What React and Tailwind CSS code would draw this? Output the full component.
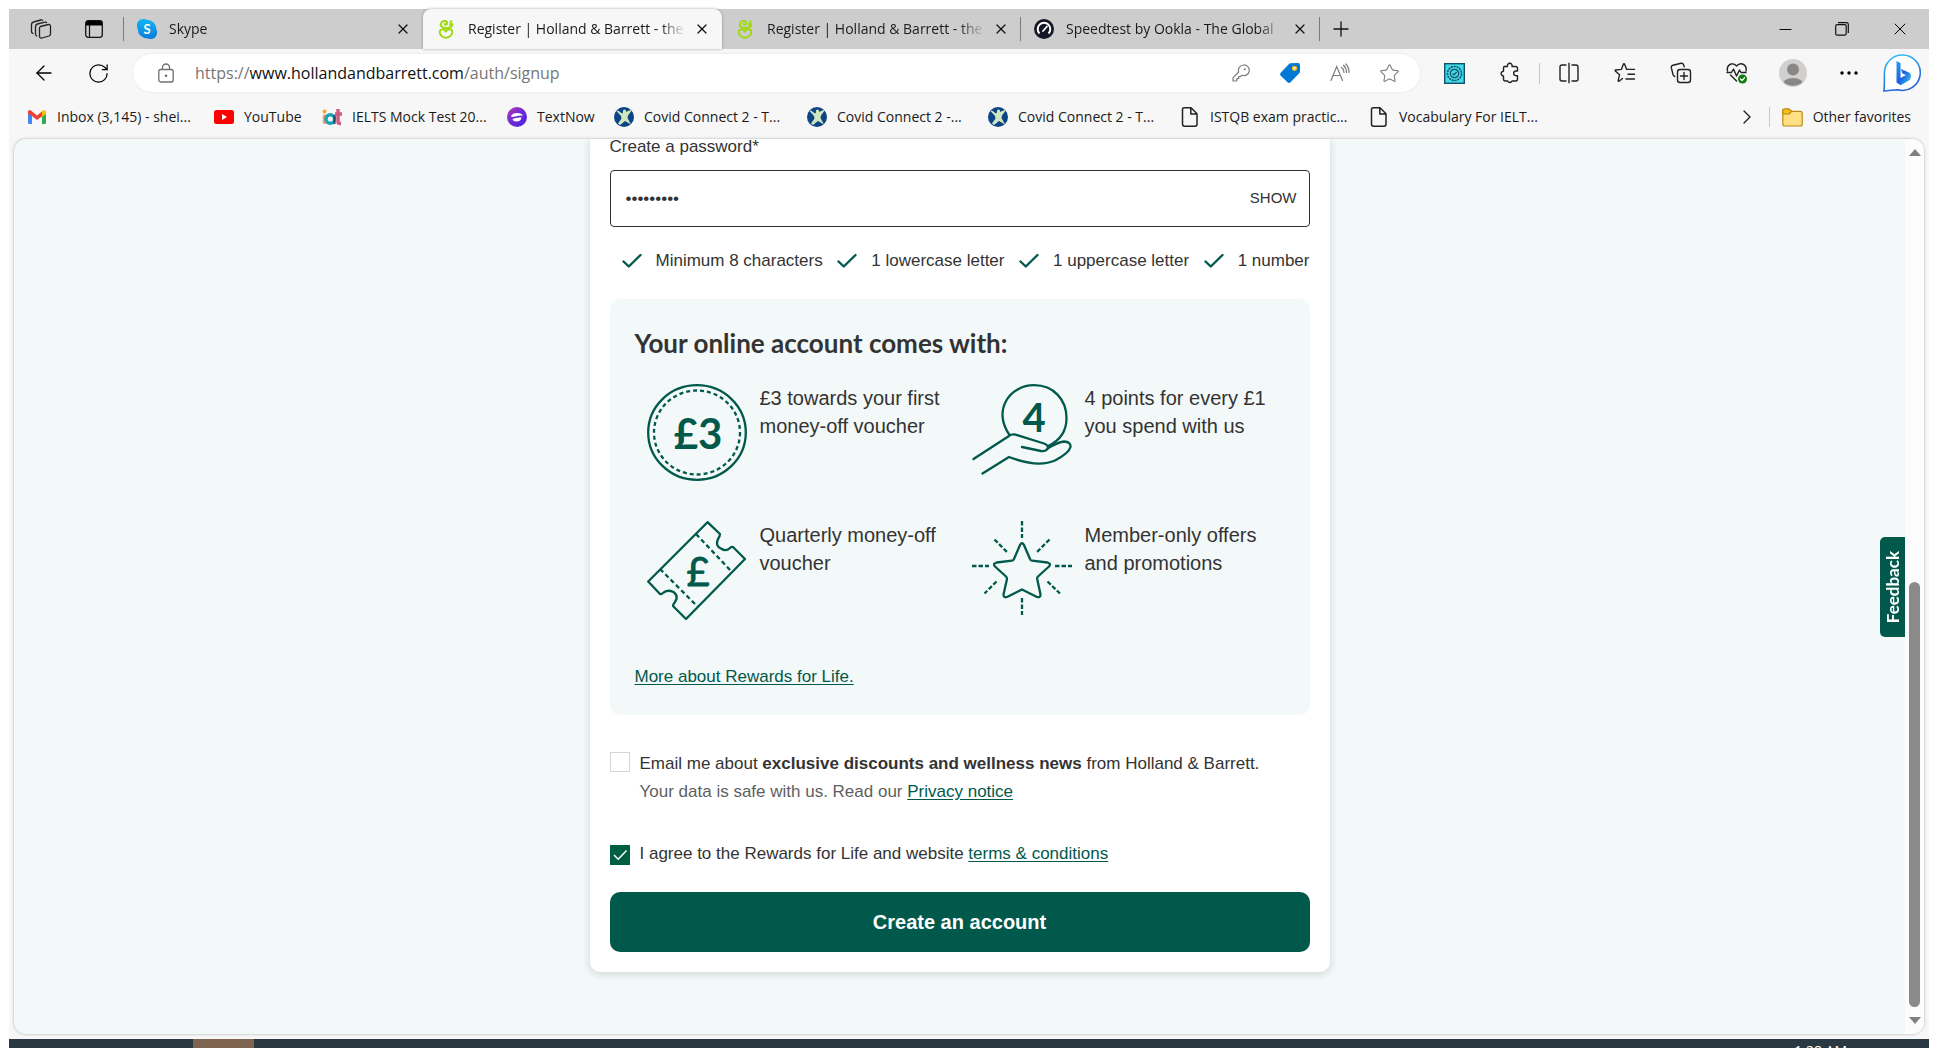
import React from "react";
import { ArrowLeft, RotateCw, Plus, X, Star, ChevronRight, Minus } from "lucide-react";

/* ---------- browser icons ---------- */

function LeafAmpersand() {
  return (
    <svg viewBox="0 0 20 20" className="size-5 shrink-0" fill="none" stroke="#a0d911" strokeWidth="2" strokeLinecap="round" strokeLinejoin="round">
      <path d="M9 9C5.500 8.800 4 6 5.300 3.700C7 1 11.300 1.500 11.200 4.300C11 6 9 6 8.500 5" />
      <path d="M9 9C12.500 9.300 16.300 8.300 16.300 5.800C16 4.300 14 4.500 14 6" />
      <path d="M14.300 3L15.500 2.300" />
      <path d="M9.800 12.500C8.500 9.300 3.500 9.800 3.700 13.300C4 16.500 7 18.700 10 18.700C13.500 18.500 16.800 15.500 16.300 12.500C15.500 9.500 11 9.800 9.800 12.500Z" />
    </svg>
  );
}

function SkypeIcon() {
  return (
    <svg viewBox="0 0 20 20" className="size-5 shrink-0">
      <defs>
        <linearGradient id="skype" x1="0" y1="0" x2="0" y2="1">
          <stop offset="0" stopColor="#12b4f5" />
          <stop offset="1" stopColor="#0b7fdc" />
        </linearGradient>
      </defs>
      <rect width="13" height="13" rx="6" fill="url(#skype)" />
      <rect x="7" y="7" width="13" height="13" rx="6" fill="#0b7fdc" />
      <circle cx="10" cy="10" r="9.300" fill="url(#skype)" />
      <text x="10" y="14.500" fontSize="13" fontWeight="700" fontFamily="Lato, sans-serif" textAnchor="middle" fill="#fff">S</text>
    </svg>
  );
}

function SpeedIcon() {
  return (
    <svg viewBox="0 0 20 20" className="size-5 shrink-0" fill="none">
      <circle cx="10" cy="10" r="10" fill="#141526" />
      <path d="M5.500 14.500A6.300 6.300 0 1 1 14.500 14.500" stroke="#fff" strokeWidth="2" />
      <path d="M9 12L13 7.500" stroke="#fff" strokeWidth="1.800" strokeLinecap="round" />
    </svg>
  );
}

function WorkspacesIcon() {
  return (
    <svg viewBox="0 0 22 20" className="h-5 w-[22px]" fill="none" stroke="#222" strokeWidth="1.300" strokeLinejoin="round" strokeLinecap="round">
      <path d="M10.500 7.500L18.500 5.500Q20.500 5.200 20.500 7.500V15Q20.500 16.500 19 17L12 19Q9.500 19.500 9.500 17V9Q9.500 8 10.500 7.500Z" />
      <path d="M16.500 3.500Q16 2.800 14.800 3.200L7.500 5Q5.500 5.500 5.500 7.500V15Q5.500 16.500 6.800 17" />
      <path d="M12.500 1.400Q12 .8 10.800 1L3.500 3Q1.500 3.500 1.500 5.500V12.500Q1.500 14 3 14.500" />
    </svg>
  );
}

function TabActionsIcon() {
  return (
    <svg viewBox="0 0 18 18" className="size-[18px]" fill="none">
      <rect x=".7" y=".7" width="16.600" height="16.600" rx="2.500" stroke="#111" strokeWidth="1.300" />
      <path d="M1 3Q1 1 3 1H15Q17 1 17 3V5.500H1Z" fill="#000" />
      <path d="M4.500 5V17" stroke="#111" strokeWidth="1.200" />
    </svg>
  );
}

function LockIcon() {
  return (
    <svg viewBox="0 0 16 20" className="h-5 w-4 shrink-0" fill="none" stroke="#6f6f6f" strokeWidth="1.300">
      <rect x=".8" y="6.500" width="14.400" height="12.500" rx="2" />
      <path d="M4.500 6.500V4.500A3.500 3.500 0 0 1 11.500 4.500V6.500" />
      <circle cx="8" cy="12.800" r="1.300" fill="#6f6f6f" stroke="none" />
    </svg>
  );
}

function KeyIcon() {
  return (
    <svg viewBox="0 0 18 18" className="size-[18px]" fill="none" stroke="#7c7c7c" strokeWidth="1.200" strokeLinejoin="round">
      <path d="M11.500 1A5.300 5.300 0 1 1 10 11.200L8.500 12.700H6.700V14.600H4.800V16.300L4 17H1V13.700L6.700 8A5.300 5.300 0 0 1 11.500 1Z" />
      <circle cx="12.800" cy="5.200" r="1" fill="#7c7c7c" stroke="none" />
    </svg>
  );
}

function TagIcon() {
  return (
    <svg viewBox="0 0 22 22" className="size-[22px]">
      <path d="M11.500 1.300L19 1Q21 1 21 3V9.500Q21 10.500 20.200 11.300L11.500 20.300Q10 21.500 8.500 20.300L1.500 13.500Q.5 12 1.700 10.700L9.800 2.200Q10.500 1.400 11.500 1.300Z" fill="#0078d4" />
      <circle cx="15.500" cy="6.300" r="1.900" fill="#fff" stroke="#f2c010" strokeWidth="1.500" />
    </svg>
  );
}

function ReadAloudIcon() {
  return (
    <svg viewBox="0 0 20 20" className="size-5" fill="none" stroke="#7a7a7a" strokeWidth="1.200" strokeLinecap="round">
      <path d="M1 17.500L6.700 3.500L12.500 17.500M3 12.500H10.500" />
      <path d="M11.500 4.300Q14 6 14 9.500M13.500 2.200Q16.500 5 16.500 9.500M15.800 1Q19 4 19 9.500" />
    </svg>
  );
}

function GearTile() {
  return (
    <svg viewBox="0 0 21 21" className="size-[21px]" fill="none" stroke="#12506b">
      <rect x=".7" y=".7" width="19.600" height="19.600" fill="#43dbe8" strokeWidth="1.400" />
      <circle cx="10.500" cy="10.500" r="7" strokeWidth="1.500" strokeDasharray="2.200 .7" />
      <circle cx="10.500" cy="10.500" r="4.200" strokeWidth="1.200" />
      <path d="M8.500 10.500L10 12L12.700 9" strokeWidth="1.200" />
    </svg>
  );
}

function PuzzleIcon() {
  return (
    <svg viewBox="0 0 22 22" className="size-[22px]" fill="none" stroke="#222" strokeWidth="1.400" strokeLinejoin="round">
      <path d="M5 4.500H8.500A2.400 2.400 0 1 1 13 4.500H16.500Q18.500 4.500 18.500 6.500V9H17A2.300 2.300 0 0 0 17 13.700H18.500V17Q18.500 19 16.500 19H13A2.300 2.300 0 0 1 8.700 19H6.500Q4.500 19 4.500 17V14A2.400 2.400 0 1 1 4.500 9.200V6Z" />
    </svg>
  );
}

function SplitIcon() {
  return (
    <svg viewBox="0 0 20 22" className="h-[22px] w-5" fill="none" stroke="#222" strokeWidth="1.400">
      <path d="M7.500 3H3Q1 3 1 5V17Q1 19 3 19H7.500M12.500 3H17Q19 3 19 5V17Q19 19 17 19H12.500M10 .8V21.200" />
    </svg>
  );
}

function FavoritesIcon() {
  return (
    <svg viewBox="0 0 22 22" className="size-[22px]" fill="none" stroke="#222" strokeWidth="1.400" strokeLinejoin="round" strokeLinecap="round">
      <path d="M8.500 16.500L5 19.200Q4 19.500 4.200 18.500L5.500 12.800L1.300 9Q.8 8.200 1.700 8L7.300 7.400L9.500 2Q10 1.300 10.500 2L12.700 7.400H20.500M14 12.200H20.500M12 17H20.500" />
    </svg>
  );
}

function CollectionsIcon() {
  return (
    <svg viewBox="0 0 22 22" className="size-[22px]" fill="none" stroke="#222" strokeWidth="1.400" strokeLinecap="round">
      <rect x="7.500" y="7.500" width="13" height="13" rx="2.500" />
      <path d="M14 10.500V17.500M10.500 14H17.500M4.700 14.500Q3.500 14 3 12.500L1.300 5.700Q1 3.800 3 3.200L11 1.300Q13 1 13.700 3L14.200 4.800" />
    </svg>
  );
}

function HealthIcon() {
  return (
    <svg viewBox="0 0 22 22" className="size-[22px]" fill="none" stroke="#222" strokeWidth="1.400" strokeLinejoin="round" strokeLinecap="round">
      <path d="M1.500 9Q.5 3.500 5 2Q8.500 1.300 10.500 4Q13 1 16.500 2Q21 3.500 20 9M4.500 13L10.500 19" />
      <path d="M1 10.500H5.500L7.500 7L10.500 14L13.500 8L15 10.500H20" />
      <circle cx="16.500" cy="17" r="4.500" fill="#107c10" stroke="none" />
      <path d="M14.500 17L16 18.500L18.700 15.700" stroke="#fff" strokeWidth="1.200" />
    </svg>
  );
}

function AvatarIcon() {
  return (
    <svg viewBox="0 0 28 28" className="size-7">
      <circle cx="14" cy="14" r="14" fill="#d2d0ce" />
      <circle cx="14" cy="10.500" r="6" fill="#8a8886" />
      <path d="M4.500 23A10.500 7 0 0 1 23.500 23A14 14 0 0 1 4.500 23Z" fill="#8a8886" />
    </svg>
  );
}

function BingIcon() {
  return (
    <svg viewBox="0 0 38 38" className="size-[38px]">
      <defs>
        <linearGradient id="ring" x1="0" y1="0" x2=".4" y2="1">
          <stop offset="0" stopColor="#37c8f2" />
          <stop offset="1" stopColor="#2160dc" />
        </linearGradient>
        <linearGradient id="bee" x1="0" y1="0" x2="1" y2="1">
          <stop offset="0" stopColor="#25a7f0" />
          <stop offset=".5" stopColor="#1c5fe0" />
          <stop offset="1" stopColor="#3fd0ee" />
        </linearGradient>
      </defs>
      <path d="M19.500 1A17.700 17.700 0 1 1 15 35.800Q8 36 1 37Q1.500 33 1.400 19A18 18 0 0 1 19.500 1Z" fill="#fff" stroke="url(#ring)" strokeWidth="1.600" />
      <path d="M13.500 7L17.500 9V24L23 21L19.500 19.500L17.800 15L26 18.500Q29 20.500 27.500 24.500Q27 26 25 27L17.500 31.300L13.500 28.500Z" fill="url(#bee)" />
    </svg>
  );
}

function GmailIcon() {
  return (
    <svg viewBox="0 0 20 16" className="h-4 w-5 shrink-0">
      <path d="M1 3V13.500Q1 15 2.500 15H5V6Z" fill="#4285f4" />
      <path d="M15 6V15H17.500Q19 15 19 13.500V3Z" fill="#34a853" />
      <path d="M1 3Q1 0 4 1.500L10 6.500L16 1.500L15.500 7L10 11L5 7L1 5Z" fill="#ea4335" />
      <path d="M15 2.300Q19 -.5 19 3.500V5L15 8Z" fill="#fbbc04" />
    </svg>
  );
}

function YouTubeIcon() {
  return (
    <svg viewBox="0 0 20 14" className="h-3.5 w-5 shrink-0">
      <rect width="20" height="14" rx="2.500" fill="#f00" />
      <path d="M8 4V10L13 7Z" fill="#fff" />
    </svg>
  );
}

function IotIcon() {
  return (
    <svg viewBox="0 0 20 18" className="h-[18px] w-5 shrink-0">
      <circle cx="2.500" cy="3.500" r="2" fill="#f5a623" />
      <rect x=".8" y="6.500" width="3.500" height="9.500" rx="1.500" fill="#f0a070" />
      <circle cx="8.300" cy="11" r="4.300" fill="none" stroke="#1ba0b8" strokeWidth="3.400" />
      <path d="M12.500 7V16" stroke="#174a63" strokeWidth="2" />
      <path d="M16 1V14Q16 15.500 19 15.500M13 6H20" stroke="#d4587c" strokeWidth="3.400" fill="none" />
    </svg>
  );
}

function TextNowIcon() {
  return (
    <svg viewBox="0 0 20 20" className="size-5 shrink-0">
      <defs>
        <linearGradient id="tn" x1="0" y1="0" x2="1" y2="1">
          <stop offset="0" stopColor="#c036b0" />
          <stop offset=".5" stopColor="#6b2bd6" />
          <stop offset="1" stopColor="#4a22e0" />
        </linearGradient>
      </defs>
      <circle cx="10" cy="10" r="10" fill="url(#tn)" />
      <path d="M4 9.500Q5 6 10 6Q15 6 16 8.500Q13 8 8 9.500Q5.500 10.300 4 9.500Z" fill="#fff" />
      <path d="M5.500 12Q9 10 14.500 10.500Q14 14.500 9.500 14.500Q6 14.500 5.500 12Z" fill="#fff" />
    </svg>
  );
}

function CovidIcon() {
  return (
    <svg viewBox="0 0 20 20" className="size-5 shrink-0">
      <circle cx="10" cy="10" r="10" fill="#0d4486" />
      <path d="M2.500 4L4 3.500L8 6.500L9 5.500Q8.500 2.500 10.500 2.500Q12.500 2.500 12.300 5L15 3.500L18 3L14 8.500L13.500 11L17 17.500L11 14L6 18L4 16.500L7.500 11.500L7 9Z" fill="#cfe8bf" />
    </svg>
  );
}

function FileIcon() {
  return (
    <svg viewBox="0 0 20 20" className="size-5 shrink-0" fill="none" stroke="#222" strokeWidth="1.500" strokeLinejoin="round">
      <path d="M4 .8H11L17 6.800V17Q17 19.200 15 19.200H4.500Q2.500 19.200 2.500 17V2.500Q2.500 .8 4 .8ZM10.800 1V7H17" />
    </svg>
  );
}

function FolderIcon() {
  return (
    <svg viewBox="0 0 21 19" className="h-[19px] w-[21px] shrink-0" stroke="#bd8a12" strokeWidth="1.200">
      <path d="M.8 3Q.8 1 2.800 1H7L9.500 3.300H18.200Q20.200 3.300 20.200 5.300V16Q20.200 18 18.200 18H2.800Q.8 18 .8 16Z" fill="#ffdf83" />
      <path d="M.8 6V3Q.8 1 2.800 1H7L9.500 3.500L7.500 5.500Q7 6 6 6Z" fill="#f2c218" />
    </svg>
  );
}

/* ---------- browser chrome ---------- */

function Tab({ icon, title, active, divider }) {
  return (
    <div
      className={
        "relative flex w-[299px] shrink items-center pl-[13px] pr-2 " +
        (active ? "z-10 rounded-t-lg bg-[#f7f7f7] shadow-[0_0_3px_rgba(0,0,0,0.35)]" : "")
      }
    >
      {icon}
      <span className="ml-3 flex-1 whitespace-nowrap text-sm text-[#1a1a1a] [mask-image:linear-gradient(to_right,#000_88%,transparent)]">
        {title}
      </span>
      <button type="button" aria-label={"Close tab " + title} className="ml-1 flex size-6 items-center justify-center">
        <X size={16} strokeWidth={1.8} color="#111" />
      </button>
      {divider && <span className="absolute right-0 h-6 w-px bg-[#7b7b7b]" />}
    </div>
  );
}

function TabStrip() {
  return (
    <div className="flex h-10 bg-[#cdcdcd]">
      <div className="flex w-[115px] shrink-0 items-center">
        <button type="button" aria-label="Workspaces" className="ml-[21px]"><WorkspacesIcon /></button>
        <button type="button" aria-label="Tab actions" className="ml-[33px]"><TabActionsIcon /></button>
        <span className="ml-auto h-6 w-px bg-[#7b7b7b]" />
      </div>
      <Tab icon={<SkypeIcon />} title="Skype" />
      <Tab icon={<LeafAmpersand />} title="Register | Holland & Barrett - the" active />
      <Tab icon={<LeafAmpersand />} title="Register | Holland & Barrett - the" divider />
      <Tab icon={<SpeedIcon />} title="Speedtest by Ookla - The Global" divider />
      <button type="button" aria-label="New tab" className="flex w-[42px] items-center justify-center">
        <Plus size={24} strokeWidth={1.3} color="#111" />
      </button>
      <div className="ml-auto flex">
        <button type="button" aria-label="Minimize" className="flex w-14 items-center justify-center"><Minus size={19} strokeWidth={1.2} /></button>
        <button type="button" aria-label="Restore" className="flex w-[58px] items-center justify-center">
          <svg viewBox="0 0 14 14" className="size-3.5" fill="none" stroke="#111" strokeWidth="1.200">
            <rect x=".7" y="2.700" width="10.500" height="10.500" rx="1.500" />
            <path d="M3 .7H11.500Q13.300 .7 13.300 2.500V11" />
          </svg>
        </button>
        <button type="button" aria-label="Close window" className="flex w-[58px] items-center justify-center"><X size={20} strokeWidth={1.2} /></button>
      </div>
    </div>
  );
}

function Tool({ label, children }) {
  return (
    <button type="button" aria-label={label} className="flex w-14 shrink-0 items-center justify-center">
      {children}
    </button>
  );
}

function Toolbar() {
  return (
    <div className="flex h-12 items-center">
      <button type="button" aria-label="Back" className="ml-[23px]"><ArrowLeft size={24} strokeWidth={1.3} /></button>
      <button type="button" aria-label="Refresh" className="ml-[31px] mr-[23px]"><RotateCw size={23} strokeWidth={1.3} /></button>
      <div className="flex h-[38px] flex-1 items-center rounded-full bg-white pl-[25px] pr-5 shadow-[0_0_3px_rgba(0,0,0,0.08)]">
        <LockIcon />
        <span className="ml-[21px] flex-1 whitespace-nowrap text-base text-[#767676]">
          https://<span className="text-[#111]">www.hollandandbarrett.com</span>/auth/signup
        </span>
        <div className="flex items-center gap-[29px]">
          <button type="button" aria-label="Saved passwords"><KeyIcon /></button>
          <button type="button" aria-label="Shopping"><TagIcon /></button>
          <button type="button" aria-label="Read aloud"><ReadAloudIcon /></button>
          <button type="button" aria-label="Add to favorites"><Star size={21} strokeWidth={1.2} color="#7a7a7a" /></button>
        </div>
      </div>
      <div className="ml-1.5 flex items-center">
        <Tool label="Extension"><GearTile /></Tool>
        <Tool label="Extensions"><PuzzleIcon /></Tool>
        <span className="mx-px h-[21px] w-px bg-[#c9c9c9]" />
        <Tool label="Split screen"><SplitIcon /></Tool>
        <Tool label="Favorites"><FavoritesIcon /></Tool>
        <Tool label="Collections"><CollectionsIcon /></Tool>
        <Tool label="Browser essentials"><HealthIcon /></Tool>
        <Tool label="Profile"><AvatarIcon /></Tool>
        <Tool label="Settings and more">
          <svg viewBox="0 0 18 4" className="h-1 w-[18px]"><circle cx="2" cy="2" r="1.700" /><circle cx="9" cy="2" r="1.700" /><circle cx="16" cy="2" r="1.700" /></svg>
        </Tool>
        <button type="button" aria-label="Bing chat" className="ml-1.5 mr-2"><BingIcon /></button>
      </div>
    </div>
  );
}

const bookmarks = [
  { label: "Inbox (3,145) - shei...", icon: <GmailIcon />, width: "w-[187px]" },
  { label: "YouTube", icon: <YouTubeIcon />, width: "w-[108px]" },
  { label: "IELTS Mock Test 20...", icon: <IotIcon />, width: "w-[185px]" },
  { label: "TextNow", icon: <TextNowIcon />, width: "w-[107px]" },
  { label: "Covid Connect 2 - T...", icon: <CovidIcon />, width: "w-[193px]" },
  { label: "Covid Connect 2 -...", icon: <CovidIcon />, width: "w-[181px]" },
  { label: "Covid Connect 2 - T...", icon: <CovidIcon />, width: "w-[192px]" },
  { label: "ISTQB exam practic...", icon: <FileIcon />, width: "w-[189px]" },
  { label: "Vocabulary For IELT...", icon: <FileIcon />, width: "w-[180px]" },
];

function BookmarksBar() {
  return (
    <nav className="flex h-10 items-center pl-[18px] text-sm text-[#1a1a1a]">
      {bookmarks.map((b, i) => (
        <a key={i} href="#" className={"flex shrink-0 items-center gap-2.5 whitespace-nowrap " + b.width}>
          {b.icon}
          {b.label}
        </a>
      ))}
      <button type="button" aria-label="More bookmarks" className="ml-auto mr-2.5"><ChevronRight size={24} strokeWidth={1.3} /></button>
      <span className="h-5 w-px bg-[#c9c9c9]" />
      <a href="#" className="ml-3 mr-[18px] flex items-center gap-2.5 whitespace-nowrap"><FolderIcon />Other favorites</a>
    </nav>
  );
}

/* ---------- sign-up page ---------- */

const drawing = "h-[100px] w-[100px] shrink-0";

function CoinDrawing() {
  return (
    <svg viewBox="0 0 100 100" className={drawing} fill="none" stroke="#01594c" strokeWidth="2.300">
      <ellipse cx="50" cy="48.500" rx="48.800" ry="47.300" />
      <ellipse cx="50" cy="48.500" rx="43" ry="42" strokeDasharray="4 3" />
      <text x="51" y="65" fontSize="42" fontFamily="Lato, sans-serif" fontWeight="700" textAnchor="middle" fill="#01594c" stroke="none">£3</text>
    </svg>
  );
}

function HandDrawing() {
  return (
    <svg viewBox="0 0 100 100" className={drawing} fill="none" stroke="#01594c" strokeWidth="2.300" strokeLinecap="round" strokeLinejoin="round">
      <path d="M37.500 51C20 26 38 1.200 62 1.200C82 1.200 94.500 16 94.500 34C94.500 48 87 57 76 62" />
      <text x="62" y="48" fontSize="40" fontFamily="Lato, sans-serif" fontWeight="700" textAnchor="middle" fill="#01594c" stroke="none">4</text>
      <path d="M1.500 75L37 52Q39 50 43 50.500L72 59.500Q78 62 75 65.500Q73 67.500 69 67L50 63" />
      <path d="M75.500 64.500Q85 58.500 92 57.500Q99 58 98.500 63Q97 69 83 76.500Q66 84 37 73L10.500 89.500" />
    </svg>
  );
}

function TicketDrawing() {
  return (
    <svg viewBox="0 0 100 100" className={drawing} fill="none" stroke="#01594c" strokeWidth="2.300" strokeLinejoin="round">
      <path d="M60.500 1.200L73 13Q73 15 71 18Q68 25 74 27.500Q79 31 83 27Q84.500 25.500 86 26L98 38L39 98L26 85Q26 83.500 28 81Q32 75 26.500 71Q20 68 16 72Q14.500 73.500 13 73L1.200 60.500Z" />
      <path d="M49 13L85 51M13 48L51 86" strokeDasharray="4.500 3" />
      <text x="51" y="64.500" fontSize="40" fontFamily="Lato, sans-serif" textAnchor="middle" fill="#01594c" stroke="#01594c" strokeWidth=".8">£</text>
    </svg>
  );
}

function StarDrawing() {
  return (
    <svg viewBox="0 0 100 100" className={drawing} fill="none" stroke="#01594c" strokeWidth="2.300" strokeLinejoin="round">
      <path d="M48 24Q50 20.500 52 24L58 38Q58.500 39.500 60 39.700L75.500 41.500Q79.500 42.500 77 45.500L66 55.500Q65 56.500 65.200 58L68.500 73.500Q68.500 77 65 76L50 68.500L35 76Q31.500 77 31.500 73.500L35 58Q35 56.500 34 55.500L23 45.500Q20.500 42.500 24.500 41.500L40 39.700Q41.500 39.500 42 38Z" />
      <path d="M50 0V17M50 77V94M0 45H17M83 45H100M22.500 18.500L35 31M77.500 18.500L65 31M24.500 60.500L12.500 72.500M75.500 60.500L88 72.500" strokeDasharray="4.500 2" />
    </svg>
  );
}

function Benefit({ drawing: picture, lines }) {
  return (
    <li className="flex h-[137px] gap-[13px] pl-3 text-xl leading-7">
      {picture}
      <p className="whitespace-nowrap">{lines[0]}<br />{lines[1]}</p>
    </li>
  );
}

function Rule({ children }) {
  return (
    <li className="flex items-center">
      <svg viewBox="0 0 20 16" className="h-4 w-5" fill="none" stroke="#01594c" strokeWidth="2.400" strokeLinecap="round" strokeLinejoin="round">
        <path d="M1.500 8.500L6.800 13.500L18.500 2" />
      </svg>
      <span className="ml-3.5">{children}</span>
    </li>
  );
}

const link = "text-[#01594c] underline underline-offset-2";

function SignupCard() {
  return (
    <form
      onSubmit={(e) => e.preventDefault()}
      className="mx-auto w-full max-w-[740px] rounded-b-[10px] bg-white px-5 pb-5 text-[17px] text-[#333] shadow-[0_2px_8px_rgba(0,0,0,0.15)]"
    >
      <label htmlFor="password" className="block leading-4">Create a password*</label>
      <div className="mt-[15px] flex h-[57px] items-center rounded border border-[#2f2f2f] pl-[15px] pr-3">
        <input id="password" type="password" defaultValue="Rewards42" className="min-w-0 flex-1 bg-transparent outline-none" />
        <button type="button" className="text-[15px]">SHOW</button>
      </div>
      <ul className="mt-[22px] flex justify-between pl-3 leading-6">
        <Rule>Minimum 8 characters</Rule>
        <Rule>1 lowercase letter</Rule>
        <Rule>1 uppercase letter</Rule>
        <Rule>1 number</Rule>
      </ul>

      <section className="mt-[26px] rounded-[10px] bg-[#f3f8f8] px-[25px] pb-6 pt-[26px]">
        <h2 className="font-[Lato] text-[26px] font-bold leading-9">Your online account comes with:</h2>
        <ul className="mt-[23px] grid grid-cols-2">
          <Benefit drawing={<CoinDrawing />} lines={["£3 towards your first", "money-off voucher"]} />
          <Benefit drawing={<HandDrawing />} lines={["4 points for every £1", "you spend with us"]} />
          <Benefit drawing={<TicketDrawing />} lines={["Quarterly money-off", "voucher"]} />
          <Benefit drawing={<StarDrawing />} lines={["Member-only offers", "and promotions"]} />
        </ul>
        <p className="mt-[5px] leading-7"><a href="#" className={link}>More about Rewards for Life.</a></p>
      </section>

      <div className="mt-[35px] flex gap-2.5 leading-7">
        <input id="emails" type="checkbox" className="mt-0.5 size-5 shrink-0 appearance-none border border-[#d6d6d6] bg-white" />
        <div>
          <label htmlFor="emails" className="block">
            Email me about <b>exclusive discounts and wellness news</b> from Holland &amp; Barrett.
          </label>
          <p className="text-[#5f5f5f]">Your data is safe with us. Read our <a href="#" className={link}>Privacy notice</a></p>
        </div>
      </div>

      <div className="mt-[34px] flex gap-2.5 leading-7">
        <span className="relative mt-[5px] size-5 shrink-0">
          <input id="terms" type="checkbox" defaultChecked className="block size-5 appearance-none bg-[#005e42]" />
          <svg viewBox="0 0 20 20" className="pointer-events-none absolute inset-0 size-5" fill="none" stroke="#fff" strokeWidth="1.500">
            <path d="M4 10L8.200 14.200L16.500 5.500" />
          </svg>
        </span>
        <label htmlFor="terms">I agree to the Rewards for Life and website <a href="#" className={link}>terms &amp; conditions</a></label>
      </div>

      <button type="submit" className="mt-6 h-[60px] w-full rounded-[10px] bg-[#01594c] text-xl font-bold text-white">
        Create an account
      </button>
    </form>
  );
}

function Scrollbar() {
  return (
    <div className="flex w-[19px] flex-col items-center bg-[#fcfcfc] py-2.5">
      <svg viewBox="0 0 12 7" className="h-[7px] w-3" fill="#7f7f7f"><path d="M0 7L6 0L12 7Z" /></svg>
      <div className="flex min-h-0 flex-1 flex-col justify-end self-stretch px-1 pb-2.5">
        <div className="h-1/2 rounded-full bg-[#8a8a8a]" />
      </div>
      <svg viewBox="0 0 12 7" className="h-[7px] w-3" fill="#7f7f7f"><path d="M0 0L6 7L12 0Z" /></svg>
    </div>
  );
}

export default function App() {
  return (
    <div className="flex h-screen flex-col overflow-hidden bg-white px-[9px] pt-[9px]">
      <div className="flex min-h-0 flex-1 flex-col bg-[#f7f7f7] font-['Open_Sans',sans-serif]">
        <header>
          <TabStrip />
          <Toolbar />
          <BookmarksBar />
        </header>
        <div className="mx-[5px] mb-[5px] mt-0.5 flex min-h-0 flex-1 overflow-hidden rounded-xl bg-[#f3f8f8] shadow-[0_0_3px_rgba(0,0,0,0.3)]">
          <main className="flex-1 overflow-hidden font-['Liberation_Sans',Arial,sans-serif]">
            <SignupCard />
          </main>
          <div className="w-0">
            <button
              type="button"
              className="relative -left-[25px] top-[398px] flex h-[100px] w-[25px] items-center justify-center rounded-l-[5px] bg-[#01594c] font-[Lato] text-[17px] font-bold text-white"
            >
              <span className="rotate-180 [writing-mode:vertical-rl]">Feedback</span>
            </button>
          </div>
          <Scrollbar />
        </div>
      </div>
      <footer className="flex h-[9px] shrink-0 overflow-hidden bg-[#2a3842] text-sm text-white">
        <span className="ml-[184px] w-[61px] bg-[#7d6451]" />
        <time className="ml-auto mr-[82px] pt-0.5 font-['Open_Sans',sans-serif] leading-5">1:28 AM</time>
      </footer>
    </div>
  );
}
